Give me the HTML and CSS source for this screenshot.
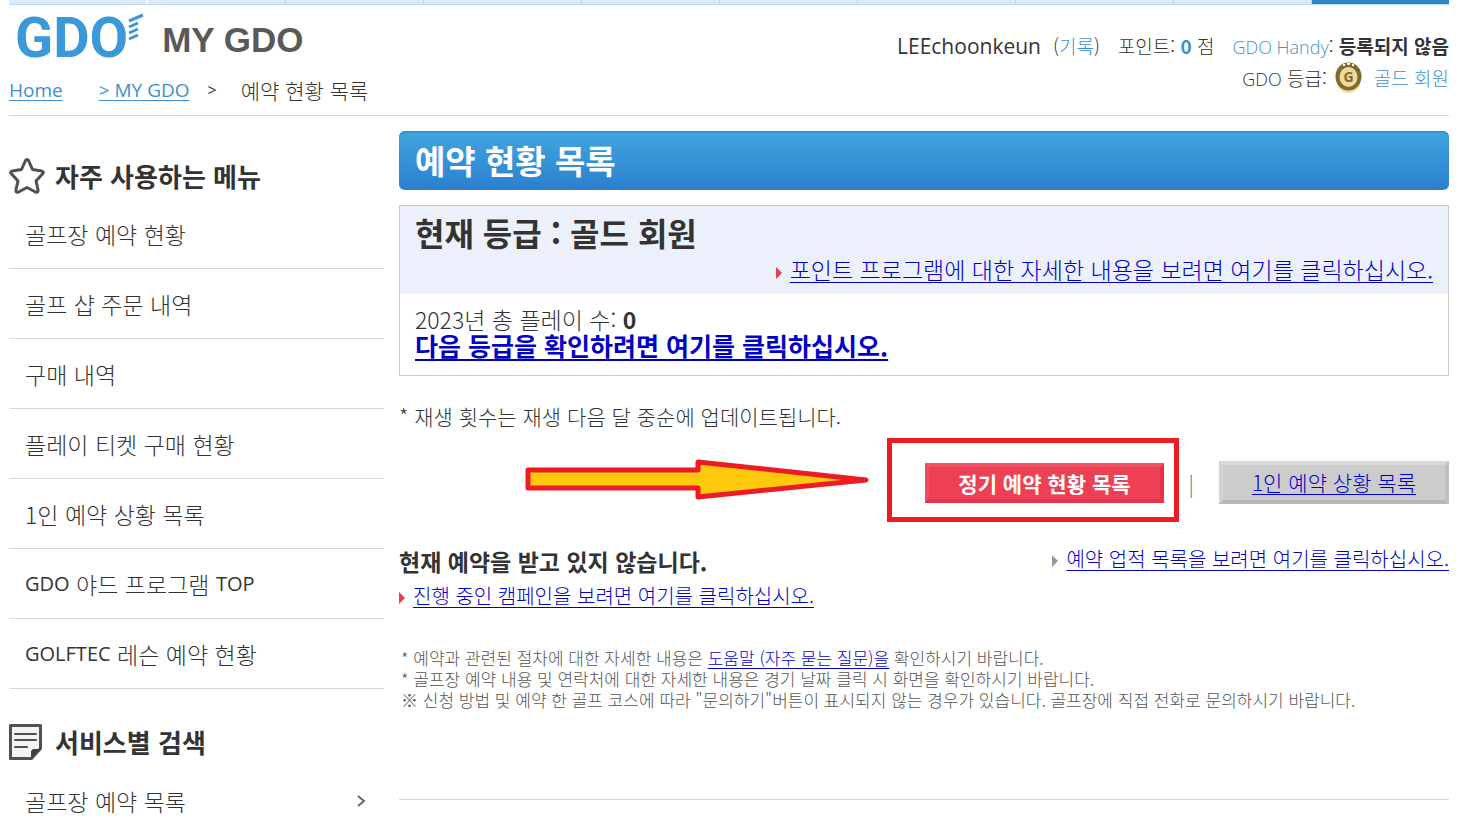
FILE: index.html
```html
<!DOCTYPE html>
<html lang="ko">
<head>
<meta charset="utf-8">
<title>MY GDO - 예약 현황 목록</title>
<link rel="stylesheet" href="styles.css">
</head>
<body>
<div class="page">
  <div class="tabs"><span></span><span></span><span></span><span class="wide"></span><span></span><span></span><span class="wide"></span><span class="wide"></span><span></span><span class="current"></span></div>
  <header class="header">
    <div class="brand-side">
      <div class="brand">
        <span class="logo">GDO</span>
        <svg class="wing" width="16" height="30" viewBox="0 0 16 30" fill="none" stroke="#3b98d9" stroke-width="3"><path d="M1 8 15 2M1 14l9-4M1 20l9-4M1 26l9-4"/></svg>
        <span class="brand-name">MY GDO</span>
      </div>
      <nav class="crumbs"><a class="home" href="#">Home</a><a href="#">&gt; MY GDO</a><span class="sep">&gt;</span><span class="here">예약 현황 목록</span></nav>
    </div>
    <div class="account">
      <div class="account-row">
        <span class="user">LEEchoonkeun</span>
        <span class="record">(<a href="#">기록</a>)</span>
        <span class="points">포인트: <b>0</b> 점</span>
        <span><a class="thin" href="#">GDO Handy</a>: <strong>등록되지 않음</strong></span>
      </div>
      <div class="account-row grade">
        <span><span class="thin">GDO</span> 등급:</span>
        <svg class="medal" width="27" height="32" viewBox="0 0 27 32"><ellipse cx="13.500" cy="19" rx="12" ry="12" fill="#f0dfa0"/><ellipse cx="13.500" cy="14.500" rx="13" ry="14" fill="#80692f"/><ellipse cx="13.500" cy="15" rx="9" ry="10" fill="#ecdc9b"/><path d="M8 3h2M12 2h3M17 3h2" stroke="#fff" stroke-width="2"/><text x="13.500" y="20" text-anchor="middle" class="medal-text">G</text></svg>
        <a href="#">골드 회원</a>
      </div>
    </div>
  </header>
  <div class="columns">
    <aside class="sidebar">
      <h2 class="side-title"><svg width="36" height="36" viewBox="0 0 36 36" fill="none" stroke="#505050" stroke-width="3" stroke-linejoin="round"><path d="M16.500 2.500Q18 .5 19.500 2.500L23.500 11.500 32.500 13Q36 14 33 16.500L27 23 29 31.500Q29.500 35 26.500 34L18 29.500 9.500 34Q6.500 35 7 31.500L9 23 3 16.500Q0 14 3.500 13L12.500 11.500Z"/></svg>자주 사용하는 메뉴</h2>
      <ul class="menu">
        <li><a href="#">골프장 예약 현황</a></li>
        <li><a href="#">골프 샵 주문 내역</a></li>
        <li><a href="#">구매 내역</a></li>
        <li><a href="#">플레이 티켓 구매 현황</a></li>
        <li><a href="#">1인 예약 상황 목록</a></li>
        <li><a href="#"><span class="latin">GDO</span> 야드 프로그램 <span class="latin">TOP</span></a></li>
        <li><a href="#"><span class="latin">GOLFTEC</span> 레슨 예약 현황</a></li>
      </ul>
      <h2 class="side-title second"><svg width="36" height="36" viewBox="0 0 36 36"><path d="M1.500 1.500h30v23l-9 10h-21Z" fill="#f4f4f4" stroke="#505050" stroke-width="3" stroke-linejoin="round"/><path d="M6 10h21M6 16h21M6 23h12" stroke="#505050" stroke-width="2" stroke-linecap="round"/><path d="M22 34v-7l2-2h8Z" fill="#404040"/></svg>서비스별 검색</h2>
      <ul class="menu last">
        <li><a href="#">골프장 예약 목록<svg width="10" height="12" viewBox="0 0 10 12" fill="none" stroke="#666" stroke-width="2"><path d="m1 1 6 5-6 5"/></svg></a></li>
      </ul>
    </aside>
    <main class="main">
      <h1 class="title">예약 현황 목록</h1>
      <section class="status">
        <div class="status-head">
          <h2>현재 등급 : 골드 회원</h2>
          <p><a class="arrow-link" href="#">포인트 프로그램에 대한 자세한 내용을 보려면 여기를 클릭하십시오.</a></p>
        </div>
        <div class="status-body">
          <p>2023년 총 플레이 수: <b>0</b></p>
          <p class="next"><a href="#">다음 등급을 확인하려면 여기를 클릭하십시오.</a></p>
        </div>
      </section>
      <p class="update">* 재생 횟수는 재생 다음 달 중순에 업데이트됩니다.</p>
      <div class="switch">
        <div class="marked">
          <button class="btn primary" type="button">정기 예약 현황 목록</button>
          <svg class="pointer" width="346" height="44" viewBox="0 0 346 44"><path d="M4 12H174V4L342 22 174 39V30H4Z" fill="#ffc90e" stroke="#ed1c24" stroke-width="5" stroke-linejoin="round"/></svg>
        </div>
        <span class="bar">|</span>
        <a class="btn secondary" href="#">1인 예약 상황 목록</a>
      </div>
      <div class="result">
        <h2>현재 예약을 받고 있지 않습니다.</h2>
        <a class="arrow-link grey" href="#">예약 업적 목록을 보려면 여기를 클릭하십시오.</a>
      </div>
      <p class="campaign"><a class="arrow-link" href="#">진행 중인 캠페인을 보려면 여기를 클릭하십시오.</a></p>
      <div class="notes">
        <p>* 예약과 관련된 절차에 대한 자세한 내용은 <a href="#">도움말 (자주 묻는 질문)을</a> 확인하시기 바랍니다.</p>
        <p>* 골프장 예약 내용 및 연락처에 대한 자세한 내용은 경기 날짜 클릭 시 화면을 확인하시기 바랍니다.</p>
        <p>※ 신청 방법 및 예약 한 골프 코스에 따라 "문의하기"버튼이 표시되지 않는 경우가 있습니다. 골프장에 직접 전화로 문의하시기 바랍니다.</p>
      </div>
    </main>
  </div>
</div>
</body>
</html>
```

FILE: styles.css
```css
* { box-sizing: border-box; }
body {
  margin: 0;
  background: #fff;
  color: #333;
  font-family: "Noto Sans CJK KR", sans-serif;
  font-weight: 300;
  font-size: 21px;
  line-height: 28px;
}
h1, h2, p, ul { margin: 0; padding: 0; }
ul { list-style: none; }
b, strong, h1, h2 { font-weight: 700; }
a { color: #0000c8; text-underline-offset: 3px; text-decoration-thickness: 1px; }
.page { padding: 0 14px 0 9px; }
.latin { font-family: "Open Sans", sans-serif; font-size: 20px; font-weight: 400; }

.tabs { display: flex; height: 5px; border-bottom: 1px solid #bfd9ec; }
.tabs span { flex: 138; background: #dceafa; border-right: 1px solid #bfd9ec; }
.tabs span:first-child { border-right: 2px solid #fff; }
.tabs .wide { flex: 158; }
.tabs .current { background: #2e86c4; border: 0; }

.header {
  display: flex;
  justify-content: space-between;
  height: 111px;
  border-bottom: 1px solid #d9d9d9;
}
.brand { display: flex; align-items: flex-start; height: 68px; padding: 8px 0 0 6px; }
.logo { font: 700 56px/50px Roboto, sans-serif; color: #3b98d9; }
.brand-name { margin-left: 18px; font: 700 35px/54px "Liberation Sans", sans-serif; color: #595959; }
.crumbs { display: flex; align-items: center; height: 34px; font-family: "Open Sans", "Noto Sans CJK KR", sans-serif; font-size: 19px; font-weight: 400; }
.crumbs a { color: #3f8fcd; }
.crumbs .home { margin-right: 36px; }
.crumbs .sep { margin: 0 24px 0 18px; font-size: 16px; }
.crumbs .here { font-family: "Noto Sans CJK KR", sans-serif; font-size: 21px; font-weight: 300; }
.account { padding-top: 25px; font-size: 19px; }
.account a { color: #3f8fcd; text-decoration: none; }
.account b { color: #3f8fcd; }
.account-row { display: flex; justify-content: flex-end; align-items: center; gap: 18px; height: 32px; white-space: nowrap; }
.account .user { font: 400 21px/28px "Open Sans", sans-serif; }
.account .record { margin-left: -6px; }
.account .thin { font: 300 18px/28px "Open Sans", sans-serif; }
.account .grade { gap: 8px; }
.grade a { margin-left: 4px; }
.medal-text { font: 700 14px "Open Sans", sans-serif; fill: #80692f; }

.columns { display: grid; grid-template-columns: 375px 1fr; gap: 15px; }
.side-title { display: flex; align-items: center; gap: 10px; height: 36px; margin-top: 42px; font-size: 26px; }
.menu { margin-top: 5px; }
.menu li { border-bottom: 1px solid #d9d9d9; }
.menu a { display: flex; align-items: center; justify-content: space-between; height: 69px; padding: 0 17px 0 16px; color: #333; text-decoration: none; font-size: 23px; white-space: pre; }
.menu li:nth-child(6) a, .menu li:nth-child(7) a { justify-content: flex-start; }
.side-title.second { margin-top: 35px; }
.menu.last { margin-top: 6px; }
.menu.last li { border: 0; }

.title {
  margin-top: 15px;
  padding: 0 16px;
  border-radius: 6px;
  background: linear-gradient(#42a6df, #2b7fce);
  box-shadow: inset 0 1px 2px #2f7fb5;
  color: #fff;
  font-size: 33px;
  line-height: 59px;
}
.status { margin-top: 15px; border: 1px solid #ccc; }
.status-head { padding: 6px 15px 8px; background: #ecf0fa; }
.status-head h2 { font-size: 32px; line-height: 40px; }
.status-head p { text-align: right; font-size: 23px; line-height: 34px; }
.status-body { padding: 12px 15px 16px; font-size: 23px; line-height: 26px; }
.next { font-size: 25px; line-height: 27px; }
.next a { font-weight: 700; text-decoration-thickness: 2px; }
.update { margin-top: 26px; }

.arrow-link::before {
  content: "";
  display: inline-block;
  margin-right: 8px;
  border: 6px solid transparent;
  border-left-color: #e04050;
  border-right-width: 0;
}
.arrow-link.grey::before { border-left-color: #8c9cac; }

.switch { display: flex; justify-content: flex-end; align-items: center; margin-top: 31px; }
.marked { position: relative; }
.marked::after { content: ""; position: absolute; inset: -25px -15px -19px -38px; border: 5px solid #ed1c24; pointer-events: none; }
.pointer { position: absolute; right: 294px; top: -5px; }
.btn { display: block; padding: 0 29px; border: 4px solid; font: 300 21px/32px "Noto Sans CJK KR", sans-serif; }
.primary { background: #ed4055; border-color: #ef5365 #e8304a #e4334a #ed4c60; color: #fff; font-weight: 700; }
.secondary { border-color: #d8d8d8 #bfbfbf #b8b8b8 #d2d2d2; background: #ccc; line-height: 35px; }
.bar { margin: 0 25px; color: #4c7890; }
.result { display: flex; justify-content: space-between; margin-top: 41px; font-size: 20px; }
.result h2 { font-size: 23px; line-height: 32px; }
.campaign { margin-top: 5px; font-size: 20px; }
.notes { padding: 37px 2px 89px; border-bottom: 1px solid #d9d9d9; color: #555; font-size: 17px; line-height: 21px; }
```
